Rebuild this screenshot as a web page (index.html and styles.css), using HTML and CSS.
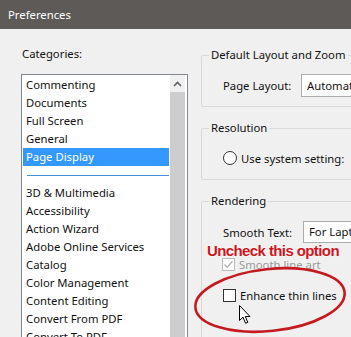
FILE: index.html
```html
<!DOCTYPE html>
<html>
  <head>
    <title>Preferences</title>
    <meta charset="utf-8" />
    <link rel="stylesheet" href="styles.css">
  </head>
  <body>
    <div class="window">
      <div class="titlebar">Preferences</div>

      <div class="dialog">
        <div class="categories">
          <div class="categories-label">Categories:</div>
          <div class="listbox">
            <ul class="list">
              <li>Commenting</li>
              <li>Documents</li>
              <li>Full Screen</li>
              <li>General</li>
              <li class="selected">Page Display</li>
              <li class="separator"></li>
              <li>3D &amp; Multimedia</li>
              <li>Accessibility</li>
              <li>Action Wizard</li>
              <li>Adobe Online Services</li>
              <li>Catalog</li>
              <li>Color Management</li>
              <li>Content Editing</li>
              <li>Convert From PDF</li>
              <li>Convert To PDF</li>
              <li>Email Accounts</li>
            </ul>
            <div class="scrollbar">
              <div class="scroll-up">
                <svg width="9" height="6" viewBox="0 0 9 6">
                  <path d="M1 5 L4.5 1.5 L8 5" fill="none" stroke="#606060" stroke-width="1.6" />
                </svg>
              </div>
              <div class="scroll-thumb"></div>
            </div>
          </div>
        </div>

        <div class="settings">
          <div class="group group-layout">
            <div class="group-title">Default Layout and Zoom</div>
            <div class="field-row">
              <span class="field-label">Page Layout:</span>
              <div class="dropdown">Automatic</div>
            </div>
          </div>

          <div class="group group-resolution">
            <div class="group-title">Resolution</div>
            <label class="option">
              <span class="radio"></span>
              <span>Use system setting:</span>
            </label>
          </div>

          <div class="group group-rendering">
            <div class="group-title">Rendering</div>
            <div class="field-row">
              <span class="field-label field-label-wide">Smooth Text:</span>
              <div class="dropdown">For Laptop/LCD screens</div>
            </div>
            <label class="option option-disabled option-smooth">
              <span class="checkbox checked">
                <svg width="11" height="11" viewBox="0 0 11 11">
                  <path d="M1.5 5.5 L4.2 8.3 L9.5 2.2" fill="none" stroke="#b4b4b4" stroke-width="1.3" />
                </svg>
              </span>
              <span>Smooth line art</span>
            </label>
            <label class="option option-enhance">
              <span class="checkbox"></span>
              <span>Enhance thin lines</span>
            </label>
          </div>
        </div>
      </div>

      <div class="callout">Uncheck this option</div>
      <svg class="highlight-ring" width="351" height="337" viewBox="0 0 351 337">
        <ellipse cx="270" cy="300" rx="75" ry="31" transform="rotate(-6 270 300)"
          fill="none" stroke="#c41a20" stroke-width="2.6" />
      </svg>
      <svg class="pointer" width="13" height="20" viewBox="0 0 13 20">
        <path d="M0.5 0.5 L0.5 15.5 L4 12.2 L6.6 18.3 L8.8 17.4 L6.3 11.5 L11 11.5 Z"
          fill="#fff" stroke="#000" stroke-width="1" stroke-linejoin="round" />
      </svg>
    </div>
  </body>
</html>
```

FILE: styles.css
```css
html,
body {
  height: 100%;
}

body {
  margin: 0;
  overflow: hidden;
  font-family: "Noto Sans", "Open Sans", sans-serif;
  font-size: 11.3px;
  color: #111;
  background-color: #f0f0f0;
}

.window {
  position: relative;
  height: 100%;
  display: flex;
  flex-direction: column;
}

.titlebar {
  height: 29px;
  flex: none;
  padding-left: 8px;
  line-height: 29px;
  color: #fff;
  background-color: #5d5a57;
}

.dialog {
  flex: 1;
  display: flex;
  min-height: 0;
}

/* left column */

.categories {
  flex: none;
  display: flex;
  flex-direction: column;
  padding: 17px 0 0 21px;
}

.categories-label {
  height: 16px;
  line-height: 16px;
  padding-left: 1px;
  margin-bottom: 12px;
}

.listbox {
  width: 167px;
  height: 300px;
  flex: none;
  box-sizing: border-box;
  display: flex;
  border: 1px solid #828790;
  background-color: #fff;
}

.list {
  width: 148px;
  flex: none;
  margin: 0;
  padding: 1px 1px 0;
  box-sizing: border-box;
  list-style: none;
}

.list li {
  height: 18px;
  line-height: 18px;
  padding-left: 3px;
  white-space: nowrap;
}

.list li.selected {
  color: #fff;
  background-color: #3399ff;
}

.list li.separator {
  display: flex;
  align-items: center;
  padding-left: 4px;
}

.list li.separator::before {
  content: "";
  flex: 1;
  height: 1px;
  background-color: #4a92d8;
}

.scrollbar {
  width: 15px;
  flex: none;
  display: flex;
  flex-direction: column;
}

.scroll-up {
  height: 17px;
  display: flex;
  align-items: center;
  justify-content: center;
  background-color: #f0f0f0;
}

.scroll-thumb {
  flex: 1;
  background-color: #cdcdcd;
}

/* right column */

.settings {
  flex: none;
  width: 240px;
  margin-left: 13px;
  padding-top: 26px;
  display: flex;
  flex-direction: column;
  gap: 21px;
}

.group {
  flex: none;
  height: 52px;
  box-sizing: border-box;
  padding-left: 21px;
  border: 1px solid #d9d9d9;
  border-radius: 2px;
}

.group-rendering {
  height: 200px;
}

.group-title {
  width: fit-content;
  height: 16px;
  line-height: 16px;
  margin: -9px 0 0 -14px;
  padding: 0 2px;
  background-color: #f0f0f0;
}

.field-row {
  display: flex;
  align-items: center;
  height: 23px;
  margin-top: 11px;
}

.field-label {
  width: 78px;
  flex: none;
}

.field-label-wide {
  width: 80px;
}

.dropdown {
  height: 23px;
  width: 150px;
  flex: none;
  box-sizing: border-box;
  padding-left: 5px;
  line-height: 21px;
  white-space: nowrap;
  border: 1px solid #acacac;
  background-color: #fff;
}

.group-rendering .field-row {
  height: 22px;
  margin-top: 12px;
}

.group-rendering .dropdown {
  height: 22px;
  line-height: 20px;
}

.option {
  display: flex;
  align-items: center;
  gap: 4px;
  height: 16px;
  margin-top: 14px;
  white-space: nowrap;
}

.option-smooth {
  margin-top: 13px;
  margin-left: -1px;
}

.option-enhance {
  margin-top: 15px;
}

.option-disabled {
  color: #9a9a9a;
}

.radio {
  width: 12px;
  height: 12px;
  border: 1px solid #333;
  border-radius: 50%;
  background-color: #fff;
}

.checkbox {
  width: 11px;
  height: 11px;
  display: flex;
  border: 1px solid #333;
  background-color: #fff;
}

.checkbox.checked {
  border-color: #bcbcbc;
}

/* annotation drawn over the dialog */

.callout {
  position: absolute;
  left: 207px;
  top: 242px;
  font-family: "Liberation Sans", Arial, sans-serif;
  font-size: 15px;
  font-weight: bold;
  letter-spacing: -0.6px;
  line-height: 18px;
  color: #cf151c;
  text-shadow: 0 0 2px #fff, 0 0 1px #fff;
}

.highlight-ring {
  position: absolute;
  left: 0;
  top: 0;
}

.pointer {
  position: absolute;
  left: 239px;
  top: 305px;
}
```
